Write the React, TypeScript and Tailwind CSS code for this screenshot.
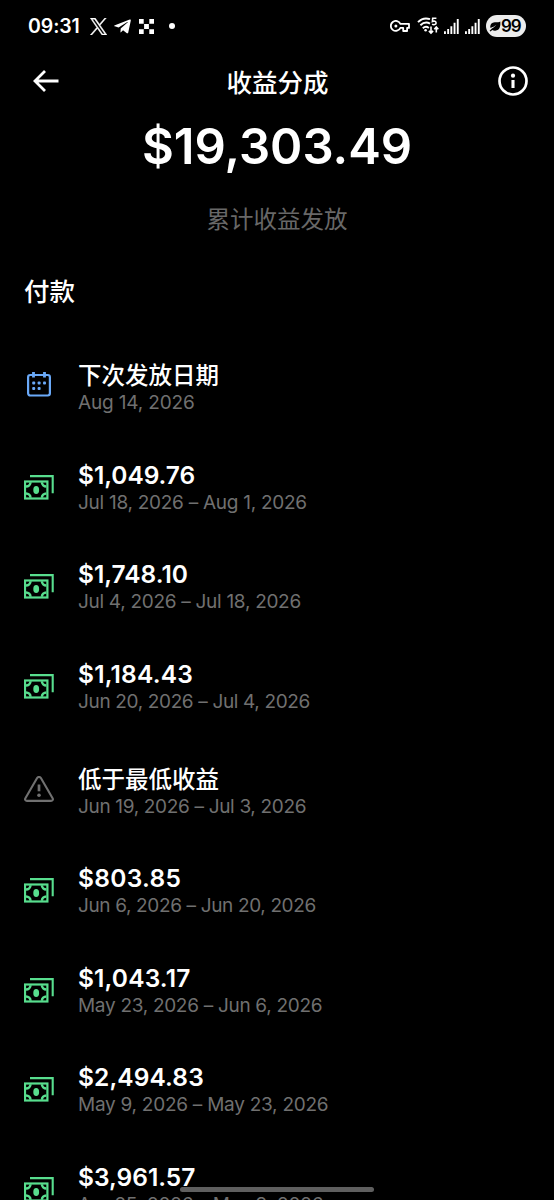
import type { ReactNode } from "react";
import { FaTelegramPlane } from "react-icons/fa";

type PayoutKind = "date" | "paid" | "below";

interface Payout {
  kind: PayoutKind;
  title: string;
  period: string;
  titleTracking?: string;
  periodTracking: string;
}

const payouts: Payout[] = [
  { kind: "date", title: "下次发放日期", period: "Aug 14, 2026", periodTracking: "tracking-[-0.15px]" },
  { kind: "paid", title: "$1,049.76", period: "Jul 18, 2026 – Aug 1, 2026", titleTracking: "tracking-[-0.05px]", periodTracking: "tracking-[-0.27px]" },
  { kind: "paid", title: "$1,748.10", period: "Jul 4, 2026 – Jul 18, 2026", titleTracking: "tracking-normal", periodTracking: "tracking-[-0.29px]" },
  { kind: "paid", title: "$1,184.43", period: "Jun 20, 2026 – Jul 4, 2026", titleTracking: "tracking-[0.2px]", periodTracking: "tracking-[-0.35px]" },
  { kind: "below", title: "低于最低收益", period: "Jun 19, 2026 – Jul 3, 2026", periodTracking: "tracking-[-0.33px]" },
  { kind: "paid", title: "$803.85", period: "Jun 6, 2026 – Jun 20, 2026", titleTracking: "tracking-[0.3px]", periodTracking: "tracking-[-0.36px]" },
  { kind: "paid", title: "$1,043.17", period: "May 23, 2026 – Jun 6, 2026", titleTracking: "tracking-[0.15px]", periodTracking: "tracking-[-0.3px]" },
  { kind: "paid", title: "$2,494.83", period: "May 9, 2026 – May 23, 2026", titleTracking: "tracking-[0.1px]", periodTracking: "tracking-[-0.26px]" },
  { kind: "paid", title: "$3,961.57", period: "Apr 25, 2026 – May 9, 2026", titleTracking: "tracking-normal", periodTracking: "tracking-[-0.2px]" },
];

function XLogo() {
  return (
    <svg viewBox="0 0 24 24" className="h-[17px] w-[17px]" fill="currentColor" stroke="currentColor" strokeWidth="0.7">
      <path d="M14.3 10.2 23 0h-2.1l-7.5 8.8L7.4 0H.4l9.1 13.3L.4 24h2.1l8-9.3 6.4 9.3h7L14.3 10.2Zm-2.8 3.3-.9-1.3L3.2 1.6h3.2l6 8.5.9 1.4 7.7 11.1h-3.1l-6.4-9.1Z" />
    </svg>
  );
}

function OkxLogo() {
  return (
    <svg viewBox="0 0 15 15" className="h-[15px] w-[15px]" fill="currentColor">
      <path d="M0 0h4.7v4.7H0zM10.3 0H15v4.7h-4.7zM5.1 5.1h4.8v4.8H5.1zM0 10.3h4.7V15H0zM10.3 10.3H15V15h-4.7z" />
    </svg>
  );
}

function KeyIcon() {
  return (
    <svg viewBox="0 0 20 12" className="mr-[7px] h-3 w-5" fill="none" stroke="currentColor" strokeWidth="1.8">
      <path d="M10.4 3.900H19v4h-1.900v3.100h-3.900V7.900h-2.800A5 5 0 1 1 10.400 3.900Z" strokeLinejoin="round" />
      <circle cx="5.900" cy="5.900" r="1.500" fill="currentColor" stroke="none" />
    </svg>
  );
}

function WifiIcon() {
  return (
    <svg viewBox="0 0 23 18" className="h-[18px] w-[23px]" fill="none" stroke="currentColor">
      <path d="M1 5.2C4.5 1.6 9 .8 13 2.2" strokeWidth="1.9" />
      <path d="M3.4 8.3c2.9-2.8 6.6-3.3 9.6-1.7" strokeWidth="1.9" />
      <path d="M5.8 11.2c1.8-1.6 4.2-1.7 6-.3" strokeWidth="1.9" />
      <circle cx="8.6" cy="13.2" r="1.3" fill="currentColor" stroke="none" />
      <path d="M19.4 1.2h-3.7l-.3 3.3c1.8-.8 3.7-.2 3.7 1.4 0 1.8-2.4 2.3-4 1.2" strokeWidth="1.6" />
      <path d="M14 9.5v6.3M11.9 13.9l2.1 2.2 2.1-2.2M19.3 15.5V10.2M17.3 12.2l2-2.2 2 2.2" strokeWidth="1.6" />
    </svg>
  );
}

function SignalIcon() {
  return (
    <svg viewBox="0 0 15 15" className="h-[15px] w-[15px]" fill="currentColor">
      <path d="M0 12.3h1.9V15H0zM3.2 10h1.9v5H3.2zM6.4 7.2h1.9V15H6.4zM9.6 3.8h1.9V15H9.6zM12.8 0h1.9v15h-1.9z" />
    </svg>
  );
}

function LeafIcon() {
  return (
    <svg viewBox="0 0 12 11" className="h-[11px] w-[12px]" fill="currentColor">
      <path d="M11.3.5c.4 4.2-.2 8.7-5 9.2-1.2.1-2.3-.2-3-.7l-1.8 1.5-.9-.8 2.3-2.3c1.8-.9 3.4-2 4.5-3.6C5.5 5.3 3.7 6.3 1.5 7 .7 3.6 2.9 1.4 5.8 1.3c2 0 3.9.1 5.5-.8Z" />
    </svg>
  );
}

function CalendarIcon() {
  return (
    <svg viewBox="0 0 24 25" className="mb-px h-[25px] w-6 text-[#6aa9f8]" fill="none" stroke="currentColor">
      <rect x="1.1" y="3" width="21.8" height="20.5" rx="2.2" strokeWidth="2.2" />
      <path d="M6.5 0v5.5M17.5 0v5.5" strokeWidth="2.8" />
      <g fill="currentColor" stroke="none">
        <rect x="5.2" y="9.4" width="3" height="3" rx="1" />
        <rect x="10.6" y="9.4" width="3" height="3" rx="1" />
        <rect x="16" y="9.4" width="3" height="3" rx="1" />
        <rect x="5.2" y="14.9" width="3" height="3" rx="1" />
        <rect x="10.6" y="14.9" width="3" height="3" rx="1" />
      </g>
    </svg>
  );
}

function CashIcon() {
  return (
    <svg viewBox="0 0 30 25" className="mt-px h-[25px] w-[30px] text-[#58de8e]" fill="none" stroke="currentColor">
      <path d="M6 1.1h22.7V18.2" strokeWidth="2.1" />
      <rect x="1" y="6.5" width="22.4" height="17" strokeWidth="2.2" />
      {/* corner arcs */}
      <path
        d="M2 11.5c2.5 0 4.5-1.8 4.5-4.2M22.4 11.5c-2.5 0-4.5-1.8-4.5-4.2M2 18.5c2.5 0 4.5 1.8 4.5 4.2M22.4 18.5c-2.5 0-4.5 1.8-4.5 4.2"
        strokeWidth="2.5"
      />
      <ellipse cx="12.2" cy="15" rx="2.9" ry="4.1" fill="currentColor" stroke="none" />
    </svg>
  );
}

function WarningIcon() {
  return (
    <svg viewBox="0 0 30 26" className="mt-px h-[26px] w-[30px] text-[#707070]" fill="none" stroke="currentColor">
      <path d="M13.1 2 1.4 22.2c-.8 1.4 0 2.7 1.6 2.7h24c1.6 0 2.4-1.3 1.6-2.7L16.9 2c-.9-1.4-2.9-1.4-3.8 0Z" strokeWidth="2.1" strokeLinejoin="round" />
      <path d="M15 8.5v6.8" strokeWidth="2.7" />
      <circle cx="15" cy="19.3" r="1.8" fill="currentColor" stroke="none" />
    </svg>
  );
}

const icons: Record<PayoutKind, ReactNode> = {
  date: <CalendarIcon />,
  paid: <CashIcon />,
  below: <WarningIcon />,
};

function StatusBar() {
  return (
    <div className="flex h-[52px] shrink-0 items-center justify-between pr-7 pl-7">
      <div className="flex items-center">
        <span className="w-[62px] text-[19.5px] leading-6 font-semibold tracking-[-0.1px]">09:31</span>
        <XLogo />
        <FaTelegramPlane className="ml-1.5 h-[19px] w-[19px]" />
        <span className="ml-[7px]">
          <OkxLogo />
        </span>
        <span className="ml-[15px] h-1.5 w-1.5 rounded-full bg-white" />
      </div>
      <div className="flex items-center">
        <KeyIcon />
        <WifiIcon />
        <span className="ml-1">
          <SignalIcon />
        </span>
        <span className="ml-1.5">
          <SignalIcon />
        </span>
        <div className="ml-1.5 flex h-[22px] w-10 items-center rounded-full bg-[#ececec] pl-[3px] text-black">
          <LeafIcon />
          <span className="text-[17px] leading-[22px] font-semibold tracking-[-1px]">99</span>
        </div>
      </div>
    </div>
  );
}

function PayoutRow({ payout }: { payout: Payout }) {
  const isPaid = payout.kind === "paid";
  return (
    <div className={`flex shrink-0 items-center ${isPaid ? "h-[99.5px]" : "h-[105px]"}`}>
      <div className="flex w-[30px] shrink-0 justify-center">{icons[payout.kind]}</div>
      <div className="ml-6 whitespace-nowrap">
        {isPaid ? (
          <p className={`pt-[3px] text-[24.5px] leading-7 font-semibold ${payout.titleTracking ?? ""}`}>{payout.title}</p>
        ) : (
          <p className="pt-[9px] text-[23.5px] leading-[27px] font-medium">{payout.title}</p>
        )}
        <p className={`text-[19px] leading-[27px] text-[#707070] ${payout.periodTracking}`}>{payout.period}</p>
      </div>
    </div>
  );
}

export default function App() {
  return (
    <div className="relative flex h-[1200px] w-[554px] flex-col overflow-hidden bg-black font-['Inter','Noto_Sans_CJK_SC',sans-serif] text-white">
      <StatusBar />
      <header className="flex h-[58px] shrink-0 items-center justify-between pr-[26px] pl-[33px]">
        <svg viewBox="0 0 26 22" className="h-[22px] w-[26px]" fill="none" stroke="currentColor" strokeWidth="2.8">
          <path d="M12 1 2 11l10 10M2 11h23.5" />
        </svg>
        <h1 className="mr-0.5 pt-1 text-[25.5px] leading-9 font-medium">收益分成</h1>
        <svg viewBox="0 0 30 30" className="mb-px h-[30px] w-[30px]" fill="none" stroke="currentColor" strokeWidth="2.7">
          <circle cx="15" cy="15" r="13.5" />
          <path d="M15 14v8" strokeWidth="3.1" />
          <circle cx="15" cy="9.7" r="2.1" fill="currentColor" stroke="none" />
        </svg>
      </header>

      <section className="flex shrink-0 flex-col items-center">
        <p className="mt-[7px] text-[49px] leading-[60px] font-semibold">$19,303.49</p>
        <p className="mt-[26px] text-[23.5px] leading-[34px] font-normal text-[#686868]">累计收益发放</p>
      </section>

      <section className="flex shrink-0 flex-col px-6 pt-[37px]">
        <h2 className="text-[25.5px] leading-9 font-medium">付款</h2>
        <div className="mt-[22px] flex flex-col">
          {payouts.map((payout) => (
            <PayoutRow key={payout.period} payout={payout} />
          ))}
        </div>
      </section>

      {/* system gesture bar */}
      <div className="absolute bottom-2 left-[180px] h-[5px] w-[194px] rounded-full bg-[#5f5f5f]" />
    </div>
  );
}
